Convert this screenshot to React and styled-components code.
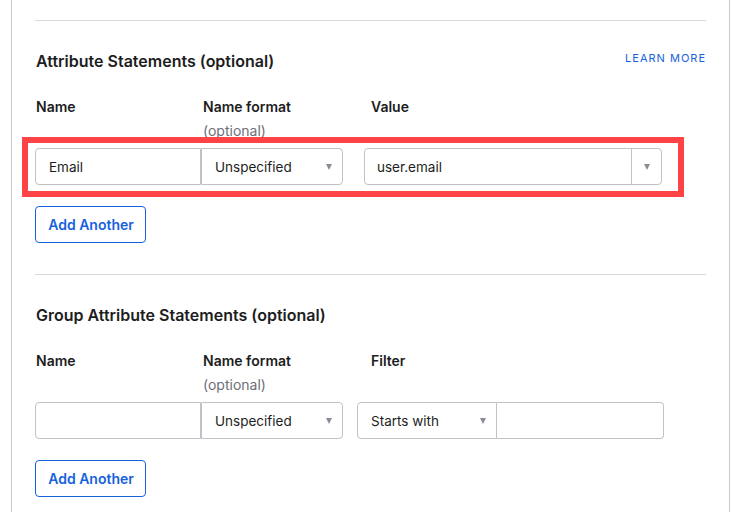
import React from "react";
import styled, { createGlobalStyle } from "styled-components";

const Global = createGlobalStyle`
  html, body { margin: 0; padding: 0; background: #fff; }
  body { font-family: Inter, "Noto Sans", "Liberation Sans", sans-serif; color: #1d1d21; }
`;

const Panel = styled.div`
  margin-left: 11px;
  width: 719px;
  height: 512px;
  border-left: 1px solid #c8c8cc;
  border-right: 1px solid #c8c8cc;
  padding: 20px 23px 0 23px;
  box-sizing: border-box;
  overflow: hidden;
`;

const Section = styled.section`
  border-top: 1px solid #d7d7dc;
  padding: 30px 0 31px 0;
`;

const HeadRow = styled.div`
  display: flex;
  justify-content: space-between;
  align-items: flex-start;
  height: 20px;
`;

const Heading = styled.h2`
  margin: 0;
  font-size: 16px;
  line-height: 21px;
  font-weight: 600;
  color: #1d1d21;
  padding-left: 1px;
`;

const Learn = styled.a`
  font-size: 11px;
  line-height: 14px;
  letter-spacing: 1px;
  margin-top: 0;
  color: #1662dd;
  text-decoration: none;
  text-transform: uppercase;
`;

const Labels = styled.div`
  display: grid;
  grid-template-columns: 167px 168px 1fr;
  height: 51px;
  margin-top: 26px;
  padding-left: 1px;
`;

const LabelCell = styled.div`
  display: flex;
  flex-direction: column;
`;

const Label = styled.span`
  font-size: 14px;
  line-height: 20px;
  font-weight: 600;
  color: #1d1d21;
`;

const Optional = styled.span`
  font-size: 14px;
  line-height: 28px;
  color: #6e6e78;
`;

const FieldRow = styled.div`
  position: relative;
  display: flex;
  align-items: stretch;
  height: 37px;
  width: ${(p) => p.$w}px;
`;

const Highlight = styled.div`
  position: absolute;
  top: -11px;
  left: -13px;
  right: -22px;
  bottom: -12px;
  border: 6px solid #fd4346;
  pointer-events: none;
`;

const Joined = styled.div`
  display: flex;
  margin-right: ${(p) => p.$gap || 0}px;
`;

const TextBox = styled.div`
  width: ${(p) => p.$w}px;
  box-sizing: border-box;
  border: 1px solid #c1c1c8;
  border-radius: ${(p) => p.$r || "4px"};
  padding-left: ${(p) => p.$pl || 13}px;
  display: flex;
  align-items: center;
  font-size: 13.5px;
  color: #1d1d21;
  background: #fff;
  ${(p) => (p.$noLeft ? "border-left: none;" : "")}
`;

const SelectBox = styled.div`
  width: ${(p) => p.$w}px;
  box-sizing: border-box;
  border: 1px solid #c1c1c8;
  border-radius: ${(p) => p.$r || "4px"};
  padding: 0 10px 0 13px;
  display: flex;
  align-items: center;
  justify-content: space-between;
  font-size: 13.5px;
  color: #1d1d21;
  background: #fff;
`;

const Caret = styled.span`
  width: 0;
  height: 0;
  border-left: 3.5px solid transparent;
  border-right: 3.5px solid transparent;
  border-top: 6px solid #8c8c96;
  margin-top: 1px;
`;

const Combo = styled.div`
  display: flex;
  width: ${(p) => p.$w}px;
  box-sizing: border-box;
  border: 1px solid #c1c1c8;
  border-radius: 4px;
  font-size: 13.5px;
  color: #1d1d21;
`;

const ComboText = styled.div`
  flex: 1;
  display: flex;
  align-items: center;
  padding-left: 12px;
`;

const ComboBtn = styled.div`
  width: 29px;
  border-left: 1px solid #c1c1c8;
  display: flex;
  align-items: center;
  justify-content: center;
`;

const Button = styled.button`
  margin-top: 21px;
  height: 37px;
  width: 111px;
  box-sizing: border-box;
  border: 1px solid #1662dd;
  border-radius: 4px;
  background: #fff;
  color: #1662dd;
  font-family: inherit;
  font-size: 14px;
  font-weight: 600;
  padding: 0 0 0 1px;
  display: block;
`;

export default function App() {
  return (
    <>
      <Global />
      <Panel>
        <Section>
          <HeadRow>
            <Heading>Attribute Statements (optional)</Heading>
            <Learn href="#">Learn more</Learn>
          </HeadRow>
          <Labels>
            <LabelCell><Label>Name</Label></LabelCell>
            <LabelCell>
              <Label>Name format</Label>
              <Optional>(optional)</Optional>
            </LabelCell>
            <LabelCell><Label>Value</Label></LabelCell>
          </Labels>
          <FieldRow $w={627}>
            <Joined $gap={21}>
              <TextBox $w={166} $r="4px 0 0 4px">Email</TextBox>
              <SelectBox $w={142} $r="0 4px 4px 0">
                Unspecified <Caret />
              </SelectBox>
            </Joined>
            <Combo $w={298}>
              <ComboText>user.email</ComboText>
              <ComboBtn><Caret /></ComboBtn>
            </Combo>
            <Highlight />
          </FieldRow>
          <Button>Add Another</Button>
        </Section>
        <Section>
          <HeadRow>
            <Heading>Group Attribute Statements (optional)</Heading>
          </HeadRow>
          <Labels>
            <LabelCell><Label>Name</Label></LabelCell>
            <LabelCell>
              <Label>Name format</Label>
              <Optional>(optional)</Optional>
            </LabelCell>
            <LabelCell><Label>Filter</Label></LabelCell>
          </Labels>
          <FieldRow $w={629}>
            <Joined $gap={14}>
              <TextBox $w={166} $r="4px 0 0 4px"></TextBox>
              <SelectBox $w={142} $r="0 4px 4px 0">
                Unspecified <Caret />
              </SelectBox>
            </Joined>
            <Joined>
              <SelectBox $w={140} $r="4px 0 0 4px">
                Starts with <Caret />
              </SelectBox>
              <TextBox $w={167} $r="0 4px 4px 0" $noLeft></TextBox>
            </Joined>
          </FieldRow>
          <Button>Add Another</Button>
        </Section>
      </Panel>
    </>
  );
}
